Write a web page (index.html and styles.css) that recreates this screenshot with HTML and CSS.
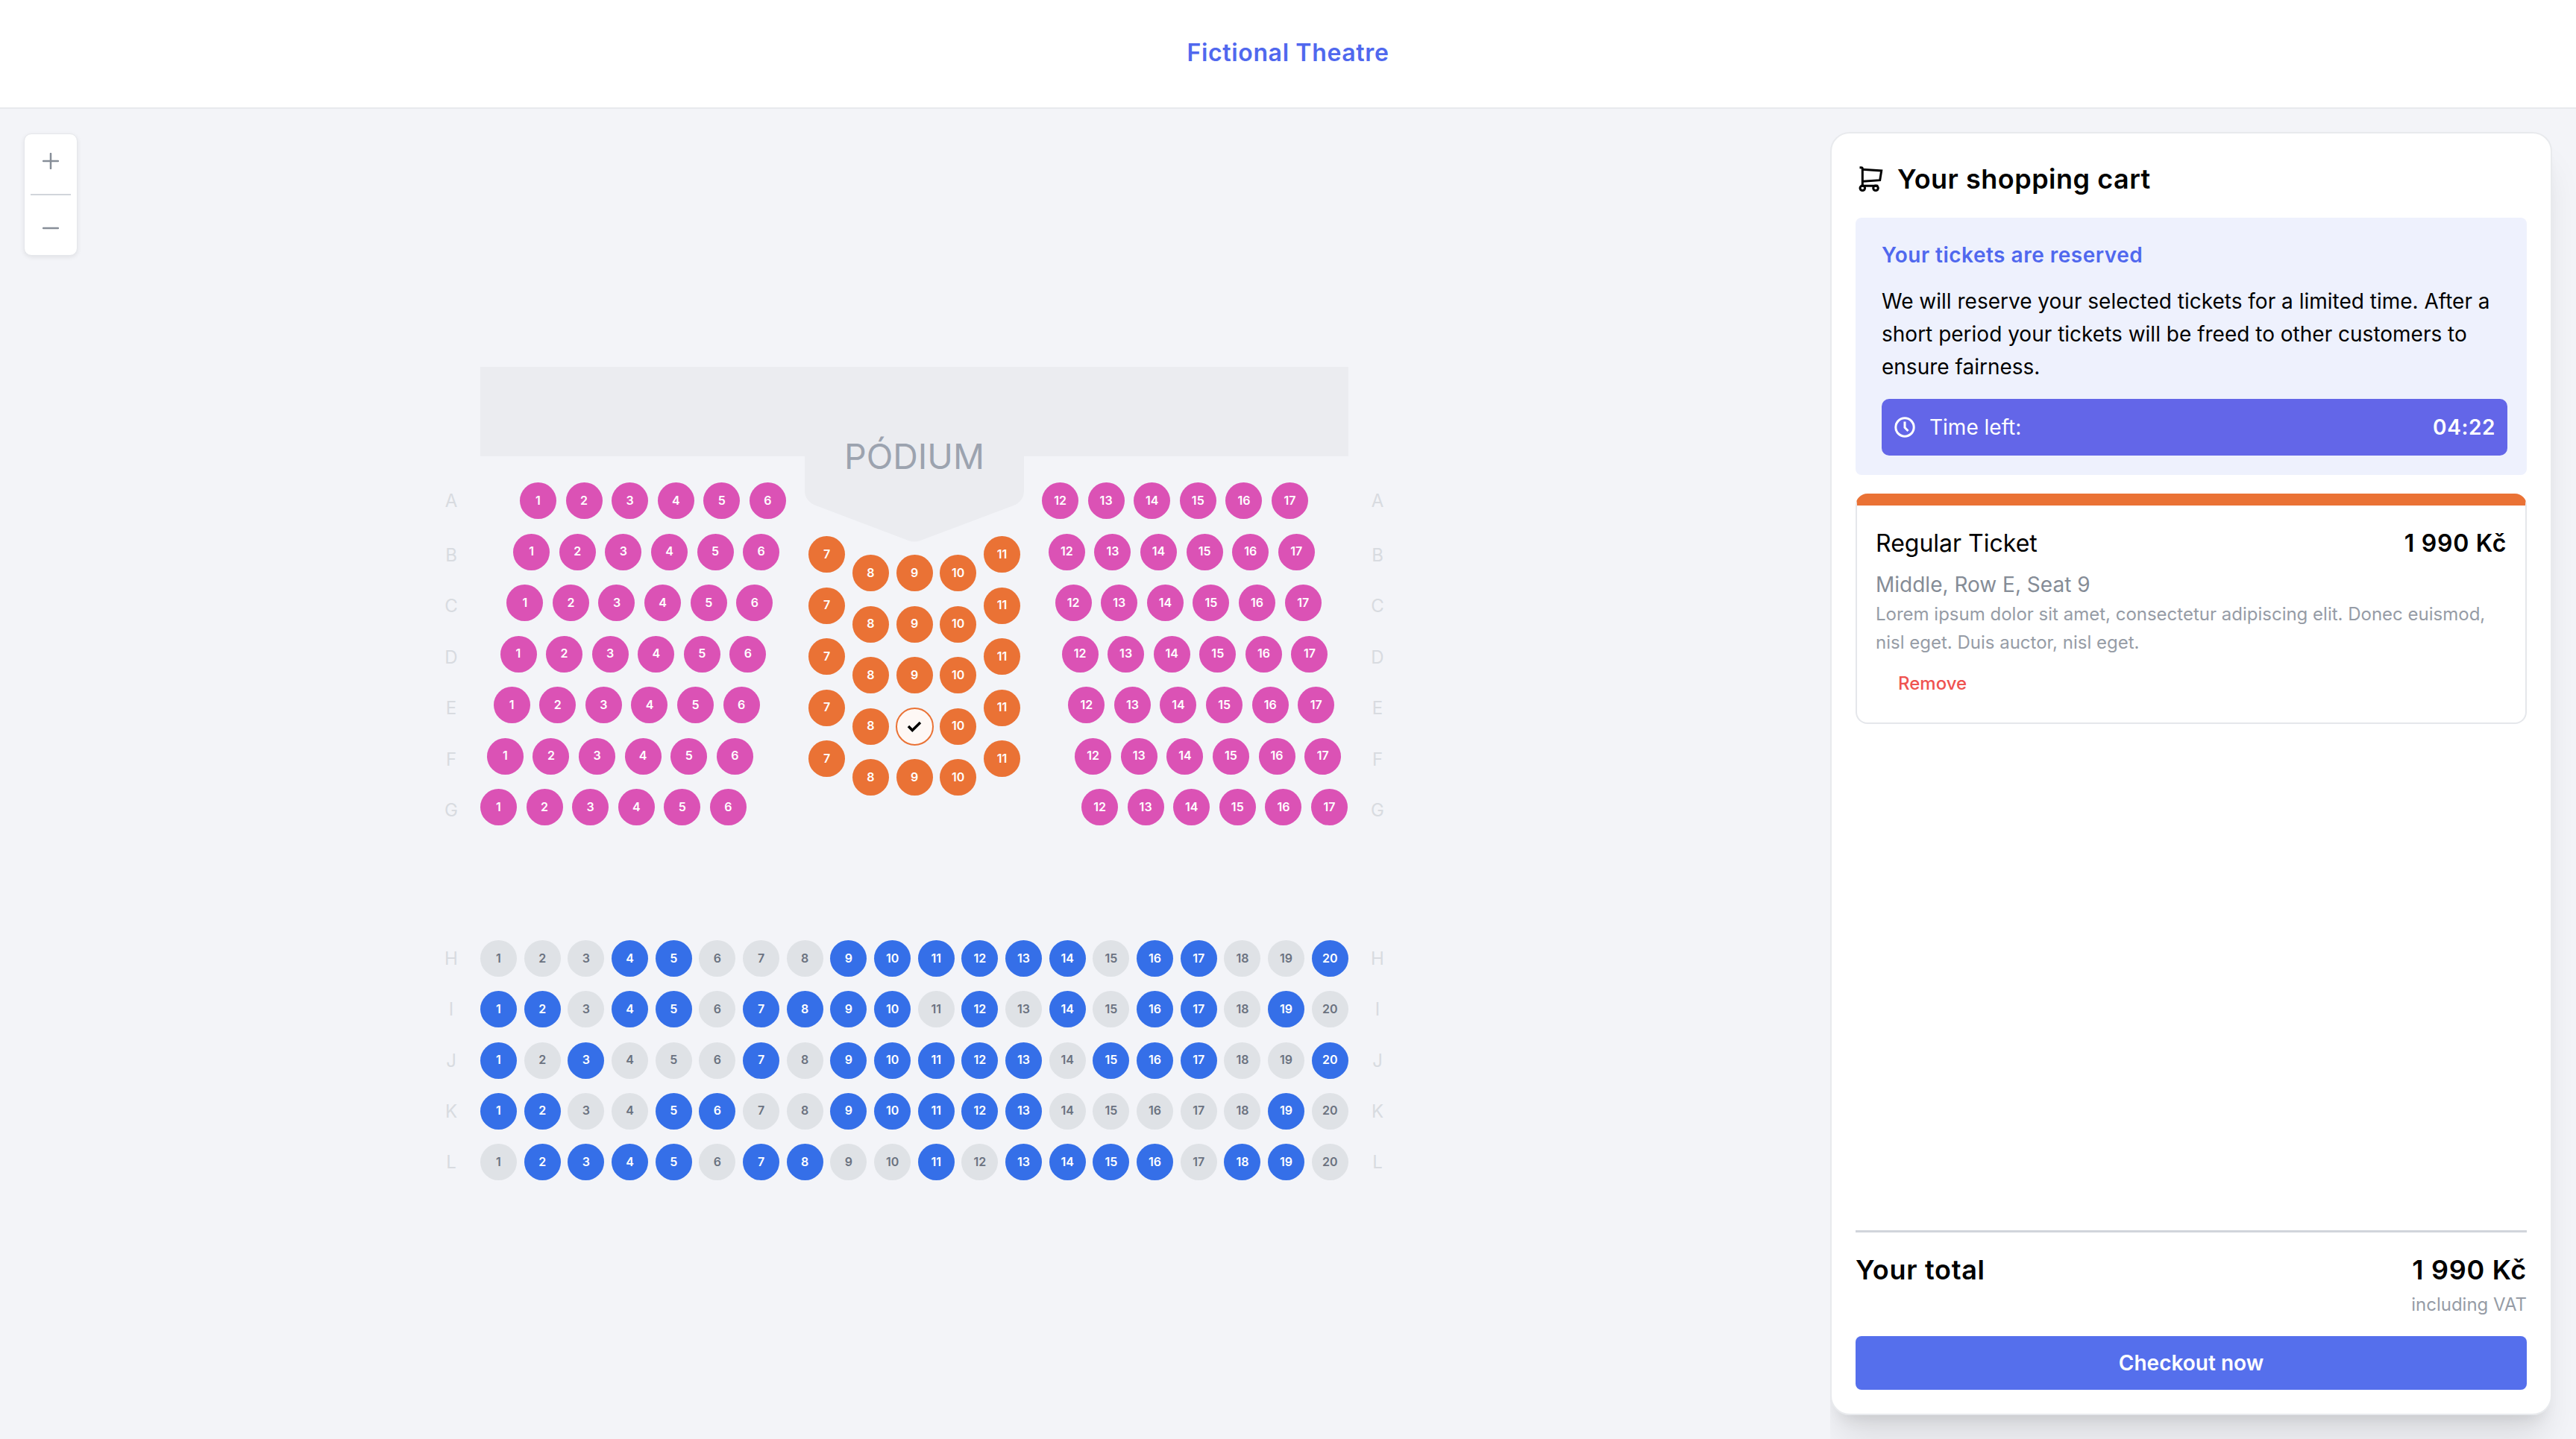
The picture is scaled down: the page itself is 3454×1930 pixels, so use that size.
FILE: index.html
```html
<!DOCTYPE html>
<html lang="en">
<head>
  <meta charset="UTF-8" />
  <meta name="viewport" content="width=device-width, initial-scale=1.0"/>
  <title>Fictional Theatre</title>
  <link rel="stylesheet" href="styles.css">
</head>
<body>
  <header class="topbar">
    <a class="brand">Fictional Theatre</a>
  </header>

  <div class="page">
    <main class="hall">
      <div class="zoom">
        <button class="zoom-btn">
          <svg width="22" height="22" viewBox="0 0 22 22"><path d="M11 1v20M1 11h20" /></svg>
        </button>
        <div class="zoom-line"></div>
        <button class="zoom-btn">
          <svg width="22" height="22" viewBox="0 0 22 22"><path d="M1 11h20" /></svg>
        </button>
      </div>

      <div class="plan">
        <div class="podium">
          <svg class="podium-tongue" width="294" height="116" viewBox="0 0 294 116"><path d="M0 0H294V46Q294 60 280 66L155 113Q147 116 139 113L15 66Q0 60 0 46Z" /></svg>
          <span class="podium-name">PÓDIUM</span>
        </div>

        <div class="balcony">
          <div class="labels">
            <span>A</span><span>B</span><span>C</span><span>D</span><span>E</span><span>F</span><span>G</span>
          </div>

          <div class="block">
            <div class="block-left">
              <div class="row"><span class="seat pink">1</span><span class="seat pink">2</span><span class="seat pink">3</span><span class="seat pink">4</span><span class="seat pink">5</span><span class="seat pink">6</span></div>
              <div class="row"><span class="seat pink">1</span><span class="seat pink">2</span><span class="seat pink">3</span><span class="seat pink">4</span><span class="seat pink">5</span><span class="seat pink">6</span></div>
              <div class="row"><span class="seat pink">1</span><span class="seat pink">2</span><span class="seat pink">3</span><span class="seat pink">4</span><span class="seat pink">5</span><span class="seat pink">6</span></div>
              <div class="row"><span class="seat pink">1</span><span class="seat pink">2</span><span class="seat pink">3</span><span class="seat pink">4</span><span class="seat pink">5</span><span class="seat pink">6</span></div>
              <div class="row"><span class="seat pink">1</span><span class="seat pink">2</span><span class="seat pink">3</span><span class="seat pink">4</span><span class="seat pink">5</span><span class="seat pink">6</span></div>
              <div class="row"><span class="seat pink">1</span><span class="seat pink">2</span><span class="seat pink">3</span><span class="seat pink">4</span><span class="seat pink">5</span><span class="seat pink">6</span></div>
              <div class="row"><span class="seat pink">1</span><span class="seat pink">2</span><span class="seat pink">3</span><span class="seat pink">4</span><span class="seat pink">5</span><span class="seat pink">6</span></div>
            </div>

            <div class="block-middle">
              <div class="col"><span class="seat orange">7</span><span class="seat orange">7</span><span class="seat orange">7</span><span class="seat orange">7</span><span class="seat orange">7</span></div>
              <div class="col col-low"><span class="seat orange">8</span><span class="seat orange">8</span><span class="seat orange">8</span><span class="seat orange">8</span><span class="seat orange">8</span></div>
              <div class="col col-low">
                <span class="seat orange">9</span><span class="seat orange">9</span><span class="seat orange">9</span>
                <span class="seat selected">
                  <svg width="22" height="18" viewBox="0 0 22 18"><path d="M3 9l5.3 5.5L19 4" /></svg>
                </span>
                <span class="seat orange">9</span>
              </div>
              <div class="col col-low"><span class="seat orange">10</span><span class="seat orange">10</span><span class="seat orange">10</span><span class="seat orange">10</span><span class="seat orange">10</span></div>
              <div class="col"><span class="seat orange">11</span><span class="seat orange">11</span><span class="seat orange">11</span><span class="seat orange">11</span><span class="seat orange">11</span></div>
            </div>

            <div class="block-right">
              <div class="row"><span class="seat pink">12</span><span class="seat pink">13</span><span class="seat pink">14</span><span class="seat pink">15</span><span class="seat pink">16</span><span class="seat pink">17</span></div>
              <div class="row"><span class="seat pink">12</span><span class="seat pink">13</span><span class="seat pink">14</span><span class="seat pink">15</span><span class="seat pink">16</span><span class="seat pink">17</span></div>
              <div class="row"><span class="seat pink">12</span><span class="seat pink">13</span><span class="seat pink">14</span><span class="seat pink">15</span><span class="seat pink">16</span><span class="seat pink">17</span></div>
              <div class="row"><span class="seat pink">12</span><span class="seat pink">13</span><span class="seat pink">14</span><span class="seat pink">15</span><span class="seat pink">16</span><span class="seat pink">17</span></div>
              <div class="row"><span class="seat pink">12</span><span class="seat pink">13</span><span class="seat pink">14</span><span class="seat pink">15</span><span class="seat pink">16</span><span class="seat pink">17</span></div>
              <div class="row"><span class="seat pink">12</span><span class="seat pink">13</span><span class="seat pink">14</span><span class="seat pink">15</span><span class="seat pink">16</span><span class="seat pink">17</span></div>
              <div class="row"><span class="seat pink">12</span><span class="seat pink">13</span><span class="seat pink">14</span><span class="seat pink">15</span><span class="seat pink">16</span><span class="seat pink">17</span></div>
            </div>
          </div>

          <div class="labels">
            <span>A</span><span>B</span><span>C</span><span>D</span><span>E</span><span>F</span><span>G</span>
          </div>
        </div>

        <div class="stalls">
          <div class="labels">
            <span>H</span><span>I</span><span>J</span><span>K</span><span>L</span>
          </div>

          <div class="stalls-rows">
            <div class="row">
              <span class="seat">1</span><span class="seat">2</span><span class="seat">3</span><span class="seat blue">4</span><span class="seat blue">5</span><span class="seat">6</span><span class="seat">7</span><span class="seat">8</span><span class="seat blue">9</span><span class="seat blue">10</span>
              <span class="seat blue">11</span><span class="seat blue">12</span><span class="seat blue">13</span><span class="seat blue">14</span><span class="seat">15</span><span class="seat blue">16</span><span class="seat blue">17</span><span class="seat">18</span><span class="seat">19</span><span class="seat blue">20</span>
            </div>
            <div class="row">
              <span class="seat blue">1</span><span class="seat blue">2</span><span class="seat">3</span><span class="seat blue">4</span><span class="seat blue">5</span><span class="seat">6</span><span class="seat blue">7</span><span class="seat blue">8</span><span class="seat blue">9</span><span class="seat blue">10</span>
              <span class="seat">11</span><span class="seat blue">12</span><span class="seat">13</span><span class="seat blue">14</span><span class="seat">15</span><span class="seat blue">16</span><span class="seat blue">17</span><span class="seat">18</span><span class="seat blue">19</span><span class="seat">20</span>
            </div>
            <div class="row">
              <span class="seat blue">1</span><span class="seat">2</span><span class="seat blue">3</span><span class="seat">4</span><span class="seat">5</span><span class="seat">6</span><span class="seat blue">7</span><span class="seat">8</span><span class="seat blue">9</span><span class="seat blue">10</span>
              <span class="seat blue">11</span><span class="seat blue">12</span><span class="seat blue">13</span><span class="seat">14</span><span class="seat blue">15</span><span class="seat blue">16</span><span class="seat blue">17</span><span class="seat">18</span><span class="seat">19</span><span class="seat blue">20</span>
            </div>
            <div class="row">
              <span class="seat blue">1</span><span class="seat blue">2</span><span class="seat">3</span><span class="seat">4</span><span class="seat blue">5</span><span class="seat blue">6</span><span class="seat">7</span><span class="seat">8</span><span class="seat blue">9</span><span class="seat blue">10</span>
              <span class="seat blue">11</span><span class="seat blue">12</span><span class="seat blue">13</span><span class="seat">14</span><span class="seat">15</span><span class="seat">16</span><span class="seat">17</span><span class="seat">18</span><span class="seat blue">19</span><span class="seat">20</span>
            </div>
            <div class="row">
              <span class="seat">1</span><span class="seat blue">2</span><span class="seat blue">3</span><span class="seat blue">4</span><span class="seat blue">5</span><span class="seat">6</span><span class="seat blue">7</span><span class="seat blue">8</span><span class="seat">9</span><span class="seat">10</span>
              <span class="seat blue">11</span><span class="seat">12</span><span class="seat blue">13</span><span class="seat blue">14</span><span class="seat blue">15</span><span class="seat blue">16</span><span class="seat">17</span><span class="seat blue">18</span><span class="seat blue">19</span><span class="seat">20</span>
            </div>
          </div>

          <div class="labels">
            <span>H</span><span>I</span><span>J</span><span>K</span><span>L</span>
          </div>
        </div>
      </div>
    </main>

    <aside class="side">
      <div class="cart">
        <h2 class="cart-title">
          <svg width="34" height="35" viewBox="-2 -1 34 35"><path d="M0.5 0.7H2.7C3.7 0.7 4.3 1.4 4.3 2.4V25.3H25.3" /><path d="M4.3 3.3L29.7 5L27.7 17.7L5 19.3" /><circle cx="4.3" cy="28.3" r="3.3" /><circle cx="22" cy="28.3" r="3.3" /></svg>
          Your shopping cart
        </h2>

        <section class="notice">
          <h3 class="notice-title">Your tickets are reserved</h3>
          <p class="notice-text">We will reserve your selected tickets for a limited time. After a short period your tickets will be freed to other customers to ensure fairness.</p>
          <div class="timer">
            <svg width="28" height="28" viewBox="0 0 28 28"><circle cx="14" cy="14" r="12.2" /><path d="M14 6.5V14.5L18.5 19" /></svg>
            <span class="timer-label">Time left:</span>
            <strong class="timer-value">04:22</strong>
          </div>
        </section>

        <article class="ticket">
          <div class="ticket-body">
            <div class="ticket-head">
              <span>Regular Ticket</span>
              <strong>1 990 Kč</strong>
            </div>
            <p class="ticket-place">Middle, Row E, Seat 9</p>
            <p class="ticket-desc">Lorem ipsum dolor sit amet, consectetur adipiscing elit. Donec euismod, nisl eget. Duis auctor, nisl eget.</p>
            <a class="ticket-remove">Remove</a>
          </div>
        </article>

        <div class="total">
          <div class="total-head">
            <span>Your total</span>
            <span>1 990 Kč</span>
          </div>
          <p class="total-vat">including VAT</p>
          <button class="checkout">Checkout now</button>
        </div>
      </div>
    </aside>
  </div>
</body>
</html>
```

FILE: styles.css
```css
* { box-sizing: border-box; }
html, body { height: 100%; }
body {
  font-family: Inter, 'Noto Sans', sans-serif;
  margin: 0;
  background: #f3f4f8;
  color: #000;
  display: flex;
  flex-direction: column;
  overflow: hidden;
}
h2, h3, p { margin: 0; }

.topbar {
  height: 146px;
  flex: none;
  padding-bottom: 4px;
  background: white;
  border-bottom: 2px solid #e8eaed;
  display: flex;
  align-items: center;
  justify-content: center;
}
.brand {
  color: #5068ee;
  font-size: 32px;
  font-weight: 600;
  letter-spacing: 0.65px;
}

.page {
  flex: 1;
  display: flex;
  min-height: 0;
}

/* seat plan */
.hall {
  flex: 1;
  position: relative;
  display: flex;
  justify-content: center;
  padding: 346px 2px 0 0;
}
.zoom {
  position: absolute;
  left: 32px;
  top: 33px;
  width: 72px;
  height: 164px;
  padding: 0 8px;
  background: white;
  border: 1px solid #e5e7eb;
  border-radius: 10px;
  box-shadow: 0 2px 6px rgba(0, 0, 0, 0.08);
  display: flex;
  flex-direction: column;
}
.zoom-btn {
  flex: 1;
  padding: 0 0 8px;
  border: none;
  background: none;
  display: flex;
  align-items: center;
  justify-content: center;
}
.zoom-btn:last-child { padding: 8px 0 0; }
.zoom-btn path {
  fill: none;
  stroke: #878e98;
  stroke-width: 2.5;
  stroke-linecap: round;
}
.zoom-line {
  height: 2px;
  background: #d1d5db;
}

.plan {
  width: 1320px;
  display: flex;
  flex-direction: column;
  align-items: center;
}
.podium {
  position: relative;
  width: 1164px;
  height: 120px;
  margin-bottom: 35px;
  background: #ebecf0;
}
.podium-tongue {
  position: absolute;
  top: 120px;
  left: 435px;
}
.podium-tongue path { fill: #ebecf0; }
.podium-name {
  position: absolute;
  top: 92px;
  left: 0;
  right: 0;
  text-align: center;
  color: #9ca3af;
  font-size: 46.5px;
  line-height: 56px;
}

.balcony,
.stalls {
  display: flex;
  justify-content: center;
}
.stalls { margin-top: 150px; }

.labels {
  width: 78px;
  display: flex;
  flex-direction: column;
  gap: 19.5px;
}
.labels span {
  height: 49px;
  line-height: 49px;
  text-align: center;
  color: #d8dbe0;
  font-size: 24px;
}
.balcony .labels span:first-child { margin-bottom: 4px; }
.stalls .labels { gap: 19.3px; }

.block {
  width: 1164px;
  display: flex;
  justify-content: space-between;
}
.block-left,
.block-right,
.stalls-rows {
  display: flex;
  flex-direction: column;
  gap: 19.5px;
}
.block-left { width: 411px; }
.block-right { width: 411px; }
.stalls-rows {
  width: 1164px;
  gap: 19.3px;
}

.row { display: flex; }
.block-left .row,
.block-right .row { gap: 12.6px; }
.stalls-rows .row { justify-content: space-between; }

.block-left .row:nth-child(1) { padding-left: 53px; }
.block-left .row:nth-child(2) { padding-left: 44.2px; }
.block-left .row:nth-child(3) { padding-left: 35.3px; }
.block-left .row:nth-child(4) { padding-left: 26.5px; }
.block-left .row:nth-child(5) { padding-left: 17.7px; }
.block-left .row:nth-child(6) { padding-left: 8.8px; }

.block-right .row:nth-child(2) { padding-left: 8.8px; }
.block-right .row:nth-child(3) { padding-left: 17.7px; }
.block-right .row:nth-child(4) { padding-left: 26.5px; }
.block-right .row:nth-child(5) { padding-left: 35.3px; }
.block-right .row:nth-child(6) { padding-left: 44.2px; }
.block-right .row:nth-child(7) { padding-left: 53px; }

.block-middle {
  display: flex;
  gap: 9.75px;
  padding-top: 72px;
}
.col {
  display: flex;
  flex-direction: column;
  gap: 19.5px;
}
.col-low { padding-top: 25px; }

.seat {
  width: 49px;
  height: 49px;
  flex: none;
  padding-bottom: 2px;
  border-radius: 50%;
  background: #dfe2e6;
  color: #6b7280;
  font-size: 16px;
  font-weight: 600;
  display: flex;
  align-items: center;
  justify-content: center;
}
.seat.blue { background: #356fe8; color: white; }
.seat.pink { background: #db52b5; color: white; }
.seat.orange { background: #ea7235; color: white; }
.seat.selected {
  width: 51px;
  height: 51px;
  margin: -1px;
  padding: 0;
  background: #fef8f5;
  border: 2.5px solid #ea7235;
}
.selected path {
  fill: none;
  stroke: #000;
  stroke-width: 3.5;
}

/* cart */
.side {
  width: 1000px;
  flex: none;
  padding: 31px 32px 32px 0;
  overflow: hidden;
}
.cart {
  height: 100%;
  padding: 32px;
  background: white;
  border: 2px solid #e8eaed;
  border-radius: 26px;
  box-shadow: 0 40px 50px -10px rgba(0, 0, 0, 0.1), 0 16px 20px -12px rgba(0, 0, 0, 0.1);
  display: flex;
  flex-direction: column;
}
.cart-title {
  height: 80px;
  margin-top: -11px;
  display: flex;
  align-items: center;
  gap: 19px;
  font-size: 36px;
  font-weight: 600;
  letter-spacing: 0.5px;
}
.cart-title svg { margin-left: 3px; }
.cart-title path,
.cart-title circle {
  fill: none;
  stroke: #000;
  stroke-width: 3;
}

.notice {
  margin-top: 12px;
  padding: 30px 26px 26px 35px;
  background: #eef1fd;
  border-radius: 8px;
}
.notice-title {
  color: #5068ee;
  font-size: 28px;
  font-weight: 600;
  line-height: 40px;
  letter-spacing: 0.5px;
}
.notice-text {
  margin-top: 20px;
  font-size: 28px;
  line-height: 44px;
}
.timer {
  margin-top: 21px;
  height: 76px;
  padding: 0 16px 0 17px;
  background: #6366e8;
  border-radius: 10px;
  color: white;
  display: flex;
  align-items: center;
  gap: 19px;
  font-size: 28px;
}
.timer path,
.timer circle {
  fill: none;
  stroke: white;
  stroke-width: 3;
}
.timer-label { flex: 1; }
.timer-value {
  font-weight: 600;
  letter-spacing: 0.6px;
}

.ticket {
  margin-top: 25px;
  border: 2px solid #e5e7eb;
  border-top: 16px solid #ea7235;
  border-radius: 16px;
  height: 309px;
}
.ticket-body { padding: 29px 25px 0; }
.ticket-head {
  display: flex;
  justify-content: space-between;
  font-size: 32px;
  line-height: 44px;
}
.ticket-head strong {
  font-weight: 600;
  letter-spacing: 0.7px;
}
.ticket-place {
  margin-top: 13px;
  color: #858c96;
  font-size: 28px;
  line-height: 40px;
}
.ticket-desc {
  margin-top: 1px;
  color: #969ca6;
  font-size: 24px;
  line-height: 38px;
}
.ticket-remove {
  display: block;
  margin: 21px 0 0 30px;
  color: #ef5350;
  font-size: 24px;
  font-weight: 500;
}

.total {
  margin-top: auto;
  border-top: 3px solid #d1d5db;
}
.total-head {
  margin-top: 28px;
  display: flex;
  justify-content: space-between;
  font-size: 36px;
  font-weight: 600;
  line-height: 44px;
  letter-spacing: 0.7px;
}
.total-vat {
  margin-top: 9px;
  text-align: right;
  color: #969ca6;
  font-size: 24px;
  line-height: 32px;
}
.checkout {
  width: 100%;
  height: 72px;
  margin-top: 26px;
  border: none;
  border-radius: 8px;
  background: #556fec;
  color: white;
  font-family: inherit;
  font-size: 28px;
  font-weight: 600;
}
```
